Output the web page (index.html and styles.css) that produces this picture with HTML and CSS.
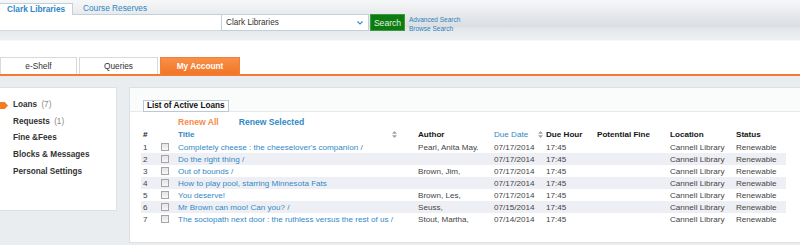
FILE: index.html
```html
<!DOCTYPE html>
<html lang="en">
<head>
<meta charset="utf-8">
<title>My Account - Loans</title>
<link rel="stylesheet" href="styles.css">
</head>
<body>
<header class="topbar">
  <div class="scopes">
    <span class="scope scope-active">Clark Libraries</span>
    <span class="scope">Course Reserves</span>
  </div>
  <div class="searchrow">
    <div class="query"></div>
    <div class="scope-select">
      <span>Clark Libraries</span>
      <svg class="chev" width="6" height="4" viewBox="0 0 6 4"><path d="M0.5 0.5 L3 3 L5.5 0.5" fill="none" stroke="#3d8fc9" stroke-width="1.2"/></svg>
    </div>
    <button class="go">Search</button>
    <div class="adv"><a>Advanced Search</a><a>Browse Search</a></div>
  </div>
</header>
<nav class="tabs">
  <a class="tab">e-Shelf</a>
  <a class="tab">Queries</a>
  <a class="tab tab-active">My Account</a>
</nav>
<div class="content">
  <aside class="side">
    <ul class="menu">
      <li class="current">Loans <span class="count">(7)</span></li>
      <li>Requests <span class="count">(1)</span></li>
      <li>Fine &amp;Fees</li>
      <li>Blocks &amp; Messages</li>
      <li>Personal Settings</li>
    </ul>
  </aside>
  <main class="panel">
    <div class="panel-head"><span class="caption">List of Active Loans</span></div>
    <table class="loans">
      <colgroup>
        <col class="c-num"><col class="c-chk"><col class="c-title"><col class="c-author"><col class="c-due"><col class="c-hour"><col class="c-fine"><col class="c-loc"><col class="c-status">
      </colgroup>
      <thead>
        <tr class="actions">
          <td></td><td></td>
          <td colspan="7"><a class="renew-all">Renew All</a><a class="renew-sel">Renew Selected</a></td>
        </tr>
        <tr class="head">
          <th>#</th><th></th>
          <th><div class="sortable"><span class="link">Title</span><svg class="sort" width="5" height="7" viewBox="0 0 5 7"><path d="M2.5 0 L5 2.8 L0 2.8 Z M2.5 7 L5 4.2 L0 4.2 Z" fill="#a3a3a3"/></svg></div></th>
          <th>Author</th>
          <th><div class="sortable due"><span class="link light">Due Date</span><svg class="sort" width="5" height="7" viewBox="0 0 5 7"><path d="M2.5 0 L5 2.8 L0 2.8 Z M2.5 7 L5 4.2 L0 4.2 Z" fill="#a3a3a3"/></svg></div></th>
          <th>Due Hour</th><th>Potential Fine</th><th>Location</th><th>Status</th>
        </tr>
      </thead>
      <tbody>
        <tr><td>1</td><td><span class="box"></span></td><td class="link">Completely cheese : the cheeselover's companion /</td><td>Pearl, Anita May.</td><td>07/17/2014</td><td>17:45</td><td></td><td>Cannell Library</td><td>Renewable</td></tr>
        <tr><td>2</td><td><span class="box"></span></td><td class="link">Do the right thing /</td><td></td><td>07/17/2014</td><td>17:45</td><td></td><td>Cannell Library</td><td>Renewable</td></tr>
        <tr><td>3</td><td><span class="box"></span></td><td class="link">Out of bounds /</td><td>Brown, Jim,</td><td>07/17/2014</td><td>17:45</td><td></td><td>Cannell Library</td><td>Renewable</td></tr>
        <tr><td>4</td><td><span class="box"></span></td><td class="link">How to play pool, starring Minnesota Fats</td><td></td><td>07/17/2014</td><td>17:45</td><td></td><td>Cannell Library</td><td>Renewable</td></tr>
        <tr><td>5</td><td><span class="box"></span></td><td class="link">You deserve!</td><td>Brown, Les,</td><td>07/17/2014</td><td>17:45</td><td></td><td>Cannell Library</td><td>Renewable</td></tr>
        <tr><td>6</td><td><span class="box"></span></td><td class="link">Mr Brown can moo! Can you? /</td><td>Seuss,</td><td>07/15/2014</td><td>17:45</td><td></td><td>Cannell Library</td><td>Renewable</td></tr>
        <tr><td>7</td><td><span class="box"></span></td><td class="link">The sociopath next door : the ruthless versus the rest of us /</td><td>Stout, Martha,</td><td>07/14/2014</td><td>17:45</td><td></td><td>Cannell Library</td><td>Renewable</td></tr>
      </tbody>
    </table>
  </main>
</div>
</body>
</html>
```
FILE: styles.css
```css
* { box-sizing: border-box; margin: 0; padding: 0; }
html, body { width: 800px; height: 245px; overflow: hidden; background: #fff; }
body { font-family: "Liberation Sans", Arial, sans-serif; color: #333; }
a { cursor: pointer; }

/* top search bar */
.topbar {
  height: 41px;
  display: flex;
  flex-direction: column;
  background: linear-gradient(to bottom, #f6f7f8 0px, #dadee2 27px, #e3e7ea 28px, #eef0f2 40px, #fff 41px);
}
.scopes { display: flex; align-items: flex-start; height: 14px; padding-top: 3px; }
.scope { font-size: 8.3px; color: #3087c4; line-height: 10px; padding-left: 10px; }
.scope-active {
  position: relative; z-index: 1;
  width: 73px; height: 12px; padding-left: 7px;
  background: #fff; border: 1px solid #c4d0d8; border-left: none; border-bottom: none;
  font-weight: bold;
}
.searchrow { display: flex; height: 17px; }
.query { width: 221px; background: #fff; border-top: 1px solid #c4d0d8; border-bottom: 1px solid #d3dade; }
.scope-select {
  width: 148px; display: flex; align-items: center;
  background: #fff; border: 1px solid #c4d0d8; padding: 0 5px 0 4px;
  font-size: 8.2px; color: #333;
}
.chev { margin-left: auto; }
.go {
  margin-left: 1px; width: 35px; height: 17px;
  background: #0c7b10; border: 1px solid #3d9a40; color: #e3f2e3;
  font-family: "Liberation Sans", Arial, sans-serif; font-size: 8.6px;
}
.adv { display: flex; flex-direction: column; margin-left: 4px; padding-top: 1px; }
.adv a { font-size: 6.5px; line-height: 9px; color: #2f80ba; }

/* main tabs */
.tabs { display: flex; gap: 2px; margin-top: 16px; border-bottom: 2px solid #f47b2f; height: 19px; }
.tab {
  width: 77px; height: 17px; text-align: center; line-height: 16px;
  border: 1px solid #d7d9db; border-bottom: none; background: #fff;
  font-size: 8.3px; color: #333;
}
.tab:nth-child(2) { width: 79px; }
.tab-active {
  width: 80px; background: linear-gradient(to bottom, #f79149, #f27526);
  border-color: #f27f36; color: #fff; font-weight: bold;
}

/* content */
.content {
  height: 169px; background: #eaedf0;
  display: flex; align-items: flex-start; gap: 12px; padding-top: 11px;
}
.side {
  width: 117px; height: 124px; background: #fff;
  border: 1px solid #dde1e4; border-left: none; padding: 9px 0 0 13px;
}
.menu { list-style: none; }
.menu li { position: relative; font-size: 8.2px; line-height: 16.7px; font-weight: bold; color: #333; }
.count { font-weight: normal; color: #8a8a8a; margin-left: 2px; }
.menu li.current::before {
  content: ""; position: absolute; left: -13px; top: 5px;
  width: 8px; height: 7px; background: #f27c1f;
  clip-path: polygon(0 0, 60% 0, 100% 50%, 60% 100%, 0 100%);
}

.panel { flex: 1; height: 156px; background: #fff; border: 1px solid #dde1e4; border-right: none; }
.panel-head { height: 24px; background: #fafbfb; border-bottom: 1px solid #e7e9eb; padding: 6px 0 0 13px; }
.caption {
  display: inline-block; height: 12px; line-height: 10px; padding: 0 3px;
  background: #fff; border: 1px solid #b8cad5; font-size: 8.2px; font-weight: bold; color: #111;
}

.loans { margin: 3px 0 0 11px; width: 645px; table-layout: fixed; border-collapse: collapse; font-size: 8.1px; color: #444; }
.c-num { width: 18px; } .c-chk { width: 17px; } .c-title { width: 240px; } .c-author { width: 76px; }
.c-due { width: 52px; } .c-hour { width: 51px; } .c-fine { width: 73px; } .c-loc { width: 66px; } .c-status { width: 52px; }
.loans td, .loans th { padding: 0 0 0 2px; white-space: nowrap; overflow: hidden; text-align: left; vertical-align: middle; }
.actions td { height: 13px; font-size: 8.6px; font-weight: bold; }
.renew-all { color: #f68b4b; margin-right: 20px; }
.renew-sel { color: #3189c6; }
.head th { height: 13px; font-size: 8.1px; font-weight: bold; color: #151515; }
.sortable { display: flex; align-items: center; padding-right: 19px; }
.sortable .sort { margin-left: auto; }
.sortable.due { padding-right: 1px; }
.head .link { color: #3189c6; }
.head .light { font-weight: normal; }
.loans tbody td { height: 12px; }
.loans tbody tr:nth-child(even) { background: #eeeff4; }
td.link { color: #3189c6; }
.box {
  display: block; width: 8px; height: 8px;
  border: 1px solid #a5a5a5; background: linear-gradient(to bottom, #e4e4e4, #f7f7f7);
}
```
